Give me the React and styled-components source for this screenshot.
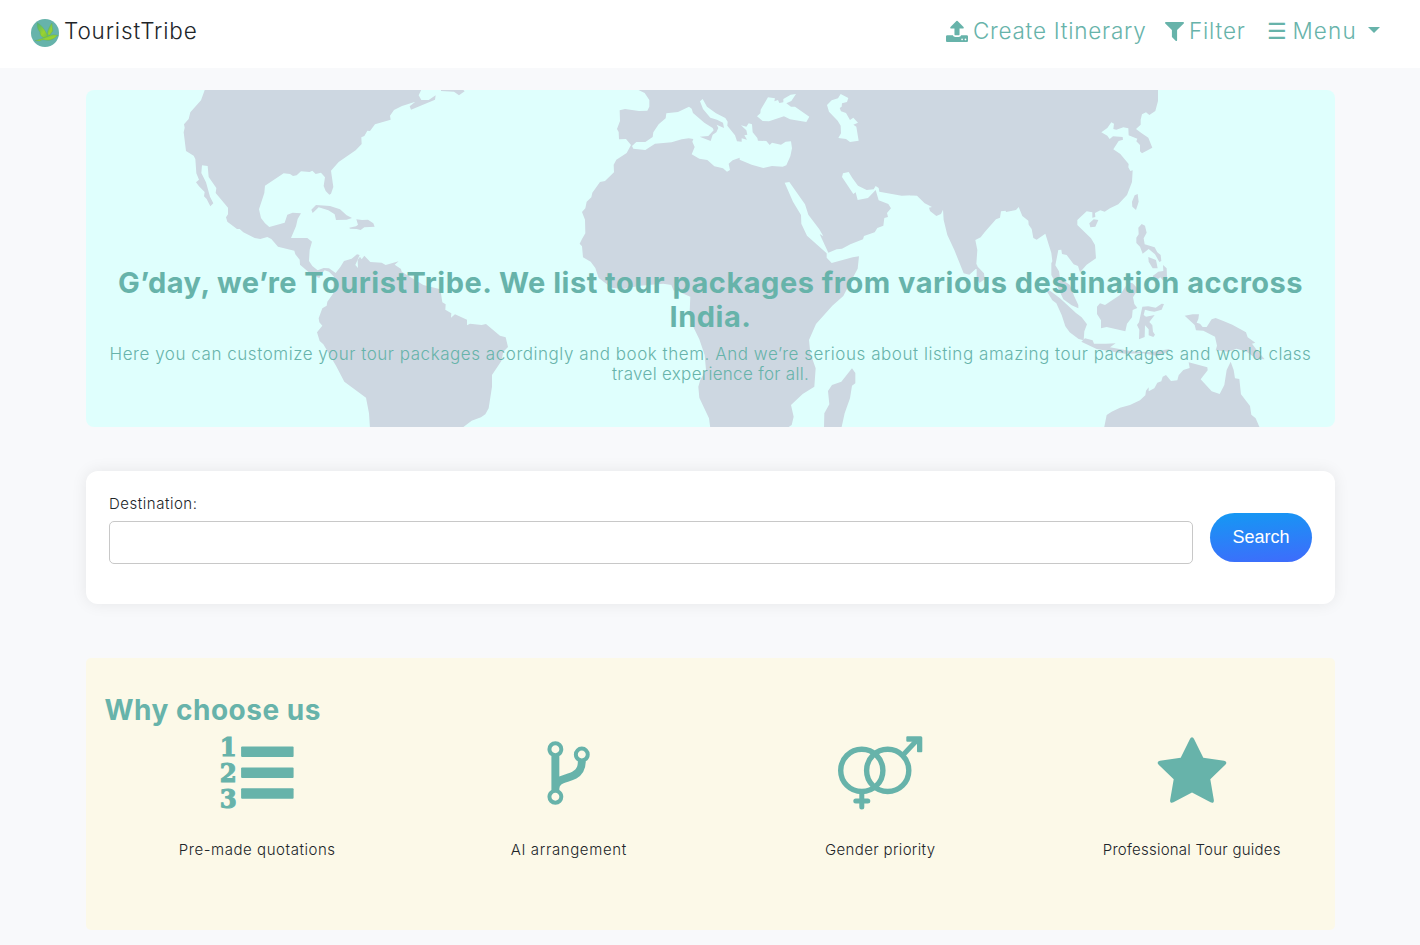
import React from 'react';
import styled, { createGlobalStyle } from 'styled-components';

const teal = '#67b3aa';

const GlobalStyle = createGlobalStyle`
  * { box-sizing: border-box; }
  html, body { margin: 0; height: 945px; overflow: hidden; }
  body {
    background: #f8f9fb;
    color: #212529;
    font-family: Inter, 'Open Sans', sans-serif;
    font-weight: 350;
  }
`;

const Navbar = styled.header`
  display: flex;
  align-items: flex-start;
  justify-content: space-between;
  height: 68px;
  padding: 16px 40px 0 31px;
  background: #fff;
`;

const Brand = styled.a`
  display: flex;
  align-items: center;
  gap: 5px;
  height: 30px;
`;

const BrandLogo = styled.svg`
  width: 28px;
  height: 28px;
  margin-top: 4px;
`;

const NavText = styled.span`
  font-size: 22.5px;
  line-height: 30px;
  white-space: nowrap;
  letter-spacing: ${(p) => p.$spacing}px;
`;

const Links = styled.nav`
  display: flex;
  color: ${teal};
  font-weight: 300;
`;

const NavLink = styled.a`
  display: flex;
  align-items: center;
  gap: ${(p) => p.$gap}px;
  width: ${(p) => p.$width}px;
  height: 30px;
`;

const NavGlyph = styled.svg`
  flex: none;
  width: ${(p) => p.$width}px;
  height: ${(p) => p.$height}px;
  fill: currentColor;
`;

const Burger = styled.span`
  font-size: 22px;
  line-height: 30px;
  font-weight: 400;
  width: 20px;
`;

const Caret = styled.span`
  border: 6px solid transparent;
  border-top-color: currentColor;
  border-bottom: 0;
  margin: -2px 0 0 6px;
`;

const Page = styled.main`
  display: flex;
  flex-direction: column;
  width: 1249px;
  margin: 22px 0 0 86px;
`;

const Banner = styled.section`
  display: grid;
  height: 337px;
  border-radius: 8px;
  overflow: hidden;
  background: #dffffd;
  color: ${teal};
  text-align: center;
  > * { grid-area: 1 / 1; }
`;

const MapArt = styled.svg`
  width: 1249px;
  height: 337px;
  fill: #cdd7e1;
`;

const BannerText = styled.div`
  align-self: end;
  z-index: 1;
  padding-bottom: 43px;
  white-space: nowrap;
`;

const Headline = styled.h1`
  margin: 0 0 10px;
  font-size: 29px;
  line-height: 34px;
  font-weight: 700;
  letter-spacing: 0.5px;
`;

const Lead = styled.p`
  margin: 0;
  font-size: 17px;
  line-height: 20px;
  letter-spacing: 0.54px;
`;

const Tighter = styled.span`
  letter-spacing: 0.3px;
`;

const SearchCard = styled.form`
  display: flex;
  gap: 17px;
  height: 133px;
  margin-top: 44px;
  padding: 23px;
  background: #fff;
  border-radius: 12px;
  box-shadow: 0 0 16px rgba(0, 0, 0, 0.08);
`;

const Field = styled.label`
  display: flex;
  flex-direction: column;
  flex: 1;
  gap: 7px;
  font-size: 15px;
  line-height: 20px;
  letter-spacing: 0.52px;
`;

const Input = styled.input`
  height: 43px;
  border: 1px solid #c8c8c8;
  border-radius: 5px;
  background: #fff;
`;

const SearchButton = styled.button`
  width: 102px;
  height: 49px;
  margin-top: 19px;
  padding: 0;
  border: 0;
  border-radius: 25px;
  background: linear-gradient(175deg, #1499f3, #3f6bfc);
  color: #fff;
  font: 18px 'Liberation Sans', Arial, sans-serif;
`;

const Reasons = styled.section`
  height: 272px;
  margin-top: 54px;
  padding: 35px 0 0 15.5px;
  border-radius: 5px;
  background: #fcf9e8;
`;

const ReasonsTitle = styled.h2`
  margin: 0 0 0 3px;
  color: ${teal};
  font-size: 28px;
  line-height: 34px;
  font-weight: 700;
  letter-spacing: 0.5px;
`;

const ReasonRow = styled.div`
  display: flex;
`;

const Reason = styled.div`
  display: flex;
  flex: 0 0 311.5px;
  flex-direction: column;
  align-items: center;
  gap: 29px;
  padding-top: 9px;
`;

const ReasonIcon = styled.svg`
  width: ${(p) => p.$width || 74}px;
  height: 75px;
  overflow: visible;
  fill: ${teal};
  color: ${teal};
`;

const ReasonLabel = styled.p`
  margin: 0;
  font-size: 15px;
  line-height: 20px;
  letter-spacing: ${(p) => p.$spacing}px;
`;

function WorldMap() {
  return (
    <MapArt viewBox="86 90 1249 337" aria-hidden="true">
      {/* The Americas */}
      <g transform="translate(80 85) scale(0.33333)">
        <path d="M376 10L363 46L331 82L326 102L312 118L314 128L311 142L318 198L341 212L346 222L349 265L357 284L348 292L357 304L374 321L372 334L380 342L391 364L400 355L390 335L378 292L364 264L366 241L383 243L386 276L409 309L407 324L444 368V388L438 397L442 410L471 432H479L490 442L524 459L541 462L562 456L574 462L594 485L643 497L646 508L659 524L660 539L690 565L718 580L724 566L734 556L747 560L762 575L760 625L742 650L740 662L727 670L716 700L718 712L727 722L711 742L719 768L730 778L768 842L793 890L858 938L867 985L870 1030H1145L1175 1007L1203 997L1216 988L1226 970L1236 905V870L1264 828L1270 800L1284 786L1277 757L1260 752L1218 717L1205 720L1170 716L1161 721V704L1125 688L1113 698L1114 685L1096 674L1097 658L1087 652L1081 613L1030 600L965 560L963 552L944 539L956 529L917 540L905 533L871 531L853 512L845 523L840 515L833 525L834 549L826 540L839 510L831 508L815 521L792 528L781 546L767 564L747 550L731 549L713 556L697 543L687 528L689 495L696 470L682 459H633L648 424L653 402L663 385L638 383L622 389L614 413L568 426L555 415L543 399L537 373L553 324L555 302L611 265L630 267L639 273L650 271L663 259L689 261L697 257L707 267L723 263L735 277L731 303L737 318L748 329L753 326L760 306L753 257L776 231L827 196L845 177L844 157L853 153L862 137L870 138L885 118L932 104L930 92L942 75L966 63L1006 50L989 64L993 74L1065 44L1067 31L1046 45L1024 45L1016 31L1026 10Z" />
        <path d="M694 374L708 360L750 363L780 373L800 391L816 399L800 404L768 405L764 388L745 376L716 367L698 384Z" />
        <path d="M808 428L828 424L834 419L829 403L846 405L864 404L880 415L884 425L853 427L842 435L830 432L810 431Z" />
        <path d="M1083 10V18L1122 20L1137 31L1154 19L1145 10Z" />
      </g>

      {/* Europe, Africa and the Middle East */}
      <g transform="translate(490 85) scale(0.33333)">
        <path d="M435 10L464 24L478 45V65L472 77L447 78L405 72L389 76L390 108L381 132L386 141L387 163L408 162L423 180L410 204L379 224L371 239L372 262L345 288L330 291L307 323L304 337L290 350L286 370L276 381L285 404L286 445L276 462L269 476L276 484L279 517L302 530L316 549L326 579L365 608L400 612L450 602L520 596L544 600L551 617L573 612L577 625L601 635L599 680L603 712L628 763L644 810L648 855L631 884L625 905L628 938L657 1000L661 1030H890L905 1020L911 995L903 960L938 927L973 905L977 850L961 805L957 765L978 717L1027 662L1060 633L1082 590L1103 551L1107 514L1088 517L1025 534L1010 518V505L951 452L934 416L933 390L909 350L884 293L898 291L945 358L955 389L988 433L1000 454L989 447L1015 503L1040 493L1056 491L1081 478L1119 463L1122 453L1154 442L1162 429L1180 422L1183 399L1194 396L1191 384L1203 370L1195 357L1166 346L1157 315L1134 339L1103 345L1097 322L1090 327L1056 276L1059 265L1076 261L1087 279L1104 302L1130 315L1151 313L1157 303L1166 309L1168 320L1235 332L1281 330L1292 340V10Z" />
        <path d="M1026 900L1054 890L1086 850L1096 864V895L1086 902L1080 940L1064 985L1054 1030H1002L1003 985L1018 958L1014 918Z" />
      </g>

      {/* Inland seas */}
      <g transform="translate(490 85) scale(0.33333)" fill="#dffffd">
        <path d="M426 183L439 171L466 171L488 156L490 142L506 118L527 100L529 85L564 81L597 65L605 71L609 84L643 113L668 129L671 136L655 153L629 155L662 168L668 149L679 142L685 129L680 119L702 129L699 113L681 104L661 98L639 72L630 49L638 42L651 65L678 85L706 99L713 110L712 122L735 151L741 169L755 170V160L771 164L763 151L772 149L769 136L753 121L769 125L776 115L786 118L788 142L802 159L804 167L829 168L839 180L846 173L873 179L887 170L903 169L906 190L901 214L889 241L878 245L846 243L820 249L785 239L749 224L749 218L728 226L716 236L720 255L711 260L699 250L673 244L652 225L628 221L605 208L614 186L607 170L610 162L596 160L575 163L545 172L495 176L466 195L430 191Z" />
        <path d="M801 94L811 85L812 74L834 37L855 40L853 49L864 45L868 54L880 52L880 42L902 29L918 27L904 48L889 55L903 65H915L958 95L949 111L900 103L882 94L837 109L818 108Z" />
        <path d="M1011 60L1025 46L1044 40L1052 27L1075 39L1071 51L1056 55L1055 65L1049 69L1053 79L1068 84L1080 105L1090 98L1104 113L1090 119L1099 125L1106 167L1080 171L1068 162L1045 159L1053 145L1052 122L1043 107L1017 80Z" />
      </g>

      {/* Asia and Oceania */}
      <g transform="translate(910 85) scale(0.33333)">
        <path d="M0 10H744V48L736 78L718 90L708 82L696 88L692 104V119L678 132L694 144L715 158L727 188L696 205L690 199V180L679 169L682 161L656 151L655 130L640 127L619 134L610 132L612 116L604 112L592 129L574 142L592 152L599 162L609 154L638 156L639 164L626 168L610 193L631 207L656 237L655 247L661 258L668 256L666 291L651 330L625 358L600 370L584 380L571 376L555 384L556 396L547 398V382L530 379L502 405V420L543 460L555 480L558 520L530 539L510 562L504 543L491 538L470 510L456 507L454 494L445 495L436 541L447 559L450 580L480 600L492 632L505 660V670L485 661L460 643L440 600L424 570V535L427 529L424 504L406 446L380 464L370 459L365 432L356 419L355 407L337 393L326 366L318 375L288 381L287 377L273 379L270 398L258 403L225 440L212 457L196 465L202 495L198 551L178 569L161 565L133 495L112 450L101 405L99 374L93 387L79 393L60 378L57 368L66 366L44 355L21 332L0 331Z" />
        <path d="M192 549L200 537L203 545L222 565L224 583L208 594L200 579V553Z" />
        <path d="M538 415L551 403L565 405L556 425L541 427Z" />
        <path d="M666 350L674 331L683 327L686 350L678 375L667 365Z" />
        <path d="M685 428L695 417L705 422L710 443L701 460L704 478L734 487L742 502L752 510L754 528L748 531L735 508L716 492L698 506L690 485L679 474V458L686 448Z" />
        <path d="M715 516L738 525L743 550L728 550L716 530Z" />
        <path d="M728 573L745 560L760 558L759 540L770 550L771 577L760 587L751 577L735 589Z" />
        <path d="M403 607L424 620L450 640L498 684L515 697L531 718L523 739L521 766L506 762L479 742L466 724L455 690L439 655L427 646Z" />
        <path d="M561 665L570 655L585 660L630 630L655 592L668 595L684 612L669 637L673 657L682 669L668 675L666 697L651 716L646 739L590 726L573 730V706L561 687Z" />
        <path d="M687 712L697 665L715 664L737 668L755 656L762 657L755 674L733 680L719 678L705 674L701 690L708 695L734 690L718 711L727 721L729 740L735 749L730 756L716 751V733L705 721L704 756L687 763L688 734L681 720Z" />
        <path d="M514 770L525 760L548 766L552 776L588 776L617 775L600 787L640 794L665 799L720 802L780 792L765 805L742 813L700 805L645 806L560 792Z" />
        <path d="M824 692L848 688L867 688L865 702L860 713L870 716L878 726L890 726L905 703L917 699L940 708L967 719L1008 742L1013 757L1036 773L1026 776L1042 797L1064 823L1040 822L1010 800L980 791L955 800L917 796L921 782L915 755L880 737L858 736L854 720Z" />
        <path d="M582 1030L590 990L605 980L630 968L660 960L690 946L706 931L708 917L716 907V919L733 910L742 893L754 889L758 875L768 870L783 888L802 886L806 871L820 855L839 849L836 832L892 847L893 856L872 883L905 919L929 927L943 900L950 855L962 830L971 855L975 880L988 882L993 928L1020 963L1024 989L1037 1000L1050 1030Z" />
      </g>
    </MapArt>
  );
}

function BirdLogo() {
  return (
    <BrandLogo viewBox="18 21 84 84" aria-hidden="true">
      <defs>
        <linearGradient id="wing" x1="0" y1="0" x2="1" y2="1">
          <stop offset="0" stopColor="#4db376" />
          <stop offset="0.6" stopColor="#9bd32e" />
          <stop offset="1" stopColor="#6cbd50" />
        </linearGradient>
      </defs>
      <circle cx="60" cy="63" r="42" fill="#66b3ab" />
      <g fill="url(#wing)" stroke="#56a766" strokeWidth="1" strokeLinejoin="round">
        <path d="M67 68C67 54 74 42 81 33C82 43 82 49 84 57L74 70Z" />
        <path d="M37 32C49 39 57 49 66 66L70 74L56 78C48 73 44 67 45 60C39 54 35 43 37 32Z" />
        <path d="M30 86L47 81L58 77C68 74 75 68 86 68L100 70C92 73 88 82 77 84C66 87 60 83 53 83L43 87Z" />
      </g>
    </BrandLogo>
  );
}

function ListIcon() {
  return (
    <ReasonIcon viewBox="-0.6 0 74 75" aria-hidden="true">
      <g fontFamily="DejaVu Serif" fontWeight="700" fontSize="25.5" stroke="currentColor" strokeWidth="1.1">
        <text x="-0.8" y="20.2" textLength="17" lengthAdjust="spacingAndGlyphs">1</text>
        <text x="-0.8" y="46.3" textLength="17" lengthAdjust="spacingAndGlyphs">2</text>
        <text x="-0.8" y="72" textLength="17" lengthAdjust="spacingAndGlyphs">3</text>
      </g>
      <rect x="20.5" y="10.5" width="52.5" height="10.6" rx="1" />
      <rect x="20.5" y="31.4" width="52.5" height="10.6" rx="1" />
      <rect x="20.5" y="52.2" width="52.5" height="10.6" rx="1" />
    </ReasonIcon>
  );
}

function ForkIcon() {
  return (
    <ReasonIcon viewBox="10 0 1792 1816" aria-hidden="true">
      <path d="M672 1472q0-40-28-68t-68-28-68 28-28 68 28 68 68 28 68-28 28-68zm0-1152q0-40-28-68t-68-28-68 28-28 68 28 68 68 28 68-28 28-68zm640 128q0-40-28-68t-68-28-68 28-28 68 28 68 68 28 68-28 28-68zm96 0q0 52-26 96.500t-70 69.500q-2 287-226 414-67 38-203 81-128 40-169.500 71t-41.500 100v26q44 25 70 69.500t26 96.500q0 80-56 136t-136 56-136-56-56-136q0-52 26-96.500t70-69.500v-820q-44-25-70-69.500t-26-96.500q0-80 56-136t136-56 136 56 56 136q0 52-26 96.500t-70 69.500v497q54-26 154-57 55-17 87.500-29.500t70.500-31 59-39.500 40.500-51 28-69.500 8.500-91.500q-44-25-70-69.500t-26-96.500q0-80 56-136t136-56 136 56 56 136z" />
    </ReasonIcon>
  );
}

function VenusMarsIcon() {
  return (
    <ReasonIcon $width={85} viewBox="0.7 0.3 85 75" aria-hidden="true">
      <g fill="none" stroke="currentColor" strokeWidth="5.4">
        <circle cx="24.5" cy="34.7" r="21.1" />
        <circle cx="50.4" cy="34.7" r="21.1" />
        <path d="M24.500 56V71.300M18.500 65.300H30.500" strokeLinecap="round" strokeWidth="5" />
        <path d="M65.500 19.500L80 4" strokeWidth="5" />
      </g>
      <path d="M70 0.500H83.500Q85 0.500 85 2V15.500Q85 16.500 84 16.500H80.700Q79.700 16.500 79.700 15.500V6H70Q69 6 69 5V1.500Q69 0.500 70 0.500Z" />
    </ReasonIcon>
  );
}

function StarIcon() {
  return (
    <ReasonIcon viewBox="0 0 1792 1816" aria-hidden="true">
      <path d="M1728 647q0 22-26 48l-363 354 86 500q1 7 1 20 0 21-10.500 35.500t-30.500 14.500q-19 0-40-12l-449-236-449 236q-22 12-40 12-21 0-31.500-14.500t-10.500-35.500q0-6 2-20l86-500-364-354q-25-27-25-48 0-37 56-46l502-73 225-455q19-41 49-41t49 41l225 455 502 73q56 9 56 46z" />
    </ReasonIcon>
  );
}

const reasons = [
  { Icon: ListIcon, label: 'Pre-made quotations', spacing: 0.55 },
  { Icon: ForkIcon, label: 'AI arrangement', spacing: 0.62 },
  { Icon: VenusMarsIcon, label: 'Gender priority', spacing: 0.35 },
  { Icon: StarIcon, label: 'Professional Tour guides', spacing: 0.24 },
];

export default function App() {
  return (
    <>
      <GlobalStyle />
      <Navbar>
        <Brand>
          <BirdLogo />
          <NavText $spacing={0.85}>TouristTribe</NavText>
        </Brand>
        <Links>
          <NavLink $width={219} $gap={5}>
            <NavGlyph $width={22} $height={22} viewBox="64 0 1664 1664" aria-hidden="true">
              <path d="M1344 1472q0-26-19-45t-45-19-45 19-19 45 19 45 45 19 45-19 19-45zm256 0q0-26-19-45t-45-19-45 19-19 45 19 45 45 19 45-19 19-45zm128-224v320q0 40-28 68t-68 28h-1472q-40 0-68-28t-28-68v-320q0-40 28-68t68-28h427q21 56 70.500 92t110.500 36h256q61 0 110.500-36t70.500-92h427q40 0 68 28t28 68zm-325-648q-17 40-59 40h-256v448q0 26-19 45t-45 19h-256q-26 0-45-19t-19-45v-448h-256q-42 0-59-40-17-39 14-69l448-448q18-19 45-19t45 19l448 448q31 30 14 69z" />
            </NavGlyph>
            <NavText $spacing={0.75}>Create Itinerary</NavText>
          </NavLink>
          <NavLink $width={102.5} $gap={5}>
            <NavGlyph $width={19} $height={19} viewBox="192 256 1408 1408" aria-hidden="true">
              <path d="M1595 295q17 41-14 70l-493 493v742q0 42-39 59-13 5-25 5-27 0-45-19l-256-256q-19-19-19-45v-486l-493-493q-31-29-14-70 17-39 59-39h1280q42 0 59 39z" />
            </NavGlyph>
            <NavText $spacing={0.85}>Filter</NavText>
          </NavLink>
          <NavLink $gap={5}>
            <Burger>☰</Burger>
            <NavText $spacing={1.2}>Menu</NavText>
            <Caret />
          </NavLink>
        </Links>
      </Navbar>

      <Page>
        <Banner>
          <WorldMap />
          <BannerText>
            <Headline>
              G’day, we’re TouristTribe. We list tour packages from various destination accross
              <br />
              India.
            </Headline>
            <Lead>
              Here you can customize your tour packages acordingly and book them. And we’re serious about listing amazing tour packages and world class
              <br />
              <Tighter>travel experience for all.</Tighter>
            </Lead>
          </BannerText>
        </Banner>

        <SearchCard>
          <Field>
            Destination:
            <Input type="text" />
          </Field>
          <SearchButton type="button">Search</SearchButton>
        </SearchCard>

        <Reasons>
          <ReasonsTitle>Why choose us</ReasonsTitle>
          <ReasonRow>
            {reasons.map(({ Icon, label, spacing }) => (
              <Reason key={label}>
                <Icon />
                <ReasonLabel $spacing={spacing}>{label}</ReasonLabel>
              </Reason>
            ))}
          </ReasonRow>
        </Reasons>
      </Page>
    </>
  );
}
